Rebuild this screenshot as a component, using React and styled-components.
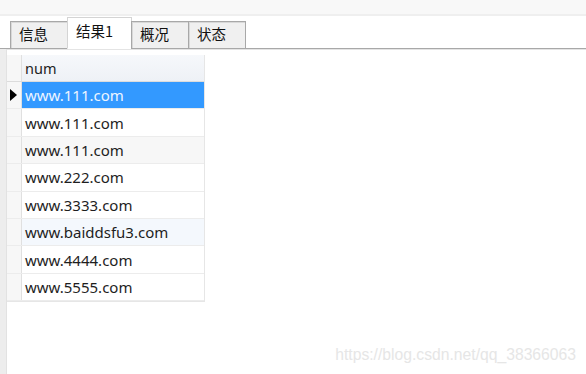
import React from 'react';
import styled, { createGlobalStyle } from 'styled-components';

const GlobalStyle = createGlobalStyle`
  html, body { margin: 0; padding: 0; background: #ffffff; }
  * { box-sizing: border-box; }
`;

const rows = [
  'www.111.com',
  'www.111.com',
  'www.111.com',
  'www.222.com',
  'www.3333.com',
  'www.baiddsfu3.com',
  'www.4444.com',
  'www.5555.com',
];

const tabs = ['信息', '结果1', '概况', '状态'];

export default function App() {
  return (
    <Page>
      <GlobalStyle />
      <TopBar />
      <TabStrip>
        {tabs.map((t, i) => (
          <Tab key={t} active={i === 1}>{t}</Tab>
        ))}
      </TabStrip>
      <Body>
        <LeftStrip />
        <GridArea>
          <Grid>
            <HeaderRow>
              <RowHead />
              <HeadCell>num</HeadCell>
            </HeaderRow>
            {rows.map((r, i) => (
              <Row key={i} selected={i === 0} tint={i === 2 ? 'gray' : i === 5 ? 'blue' : 'none'}>
                <RowHead>{i === 0 && <Pointer />}</RowHead>
                <Cell selected={i === 0}>{r}</Cell>
              </Row>
            ))}
          </Grid>
        </GridArea>
        <Watermark>https://blog.csdn.net/qq_38366063</Watermark>
      </Body>
    </Page>
  );
}

const Page = styled.div`
  width: 586px;
  height: 374px;
  display: flex;
  flex-direction: column;
  background: #ffffff;
  overflow: hidden;
  font-family: 'Noto Sans', 'Noto Sans CJK SC', sans-serif;
`;

const TopBar = styled.div`
  height: 16px;
  background: #f8f8f8;
  border-bottom: 2px solid #efefef;
`;

const TabStrip = styled.div`
  height: 33px;
  display: flex;
  align-items: flex-end;
  padding-left: 10px;
  border-bottom: 1px solid #a8a8a8;
  box-shadow: 0 1px 0 #e4e4e4;
`;

const Tab = styled.div`
  height: ${p => (p.active ? '32px' : '28px')};
  width: ${p => (p.active ? '65px' : '58px')};
  margin-bottom: -1px;
  display: flex;
  align-items: center;
  padding-left: 8px;
  padding-bottom: ${p => (p.active ? '6px' : '3px')};
  font-family: 'Noto Sans CJK SC', sans-serif;
  font-size: 14.5px;
  color: #111111;
  background: ${p => (p.active ? '#ffffff' : '#f0f0f0')};
  border: 1px solid ${p => (p.active ? '#d4d4d4' : '#a8a8a8')};
  border-bottom: ${p => (p.active ? '1px solid #ffffff' : '1px solid #a8a8a8')};
  box-shadow: ${p => (p.active ? 'none' : 'inset 1px 1px 0 #d8d8d8')};
  & + & { margin-left: -1px; }
`;

const Body = styled.div`
  flex: 1;
  display: flex;
  position: relative;
`;

const LeftStrip = styled.div`
  width: 7px;
  background: #ededed;
  border-right: 1px solid #e2e2e2;
`;

const GridArea = styled.div`
  flex: 1;
  padding-top: 6px;
`;

const Grid = styled.div`
  width: 198px;
  display: flex;
  flex-direction: column;
  border-right: 1px solid #e6e6e6;
  border-bottom: 1px solid #e6e6e6;
`;

const HeaderRow = styled.div`
  display: flex;
  height: 27px;
  background: linear-gradient(#f6f8fb, #eef1f6);
  border-bottom: 1px solid #dcdcdc;
`;

const Row = styled.div`
  display: flex;
  height: 27.4px;
  border-bottom: 1px solid #ececec;
  background: ${p =>
    p.tint === 'gray' ? '#f7f7f7' : p.tint === 'blue' ? '#f4f8fd' : '#ffffff'};
`;

const RowHead = styled.div`
  width: 15px;
  flex: none;
  display: flex;
  align-items: center;
  justify-content: flex-start;
  padding-left: 3px;
  background: #f7f7f7;
  border-right: 1px solid #e0e0e0;
`;

const Pointer = styled.div`
  width: 0;
  height: 0;
  border-top: 6px solid transparent;
  border-bottom: 6px solid transparent;
  border-left: 7px solid #000000;
`;

const HeadCell = styled.div`
  flex: 1;
  display: flex;
  align-items: center;
  padding-left: 3px;
  font-size: 14.5px;
  color: #222222;
`;

const Cell = styled.div`
  flex: 1;
  display: flex;
  align-items: center;
  padding-left: 3px;
  font-size: 15px;
  color: ${p => (p.selected ? '#eef5ff' : '#1e1e1e')};
  background: ${p => (p.selected ? '#3399ff' : 'transparent')};
`;

const Watermark = styled.div`
  position: absolute;
  right: 10px;
  bottom: 10px;
  font-family: 'Liberation Sans', Arial, sans-serif;
  font-size: 15.7px;
  color: #e6e6e6;
`;
